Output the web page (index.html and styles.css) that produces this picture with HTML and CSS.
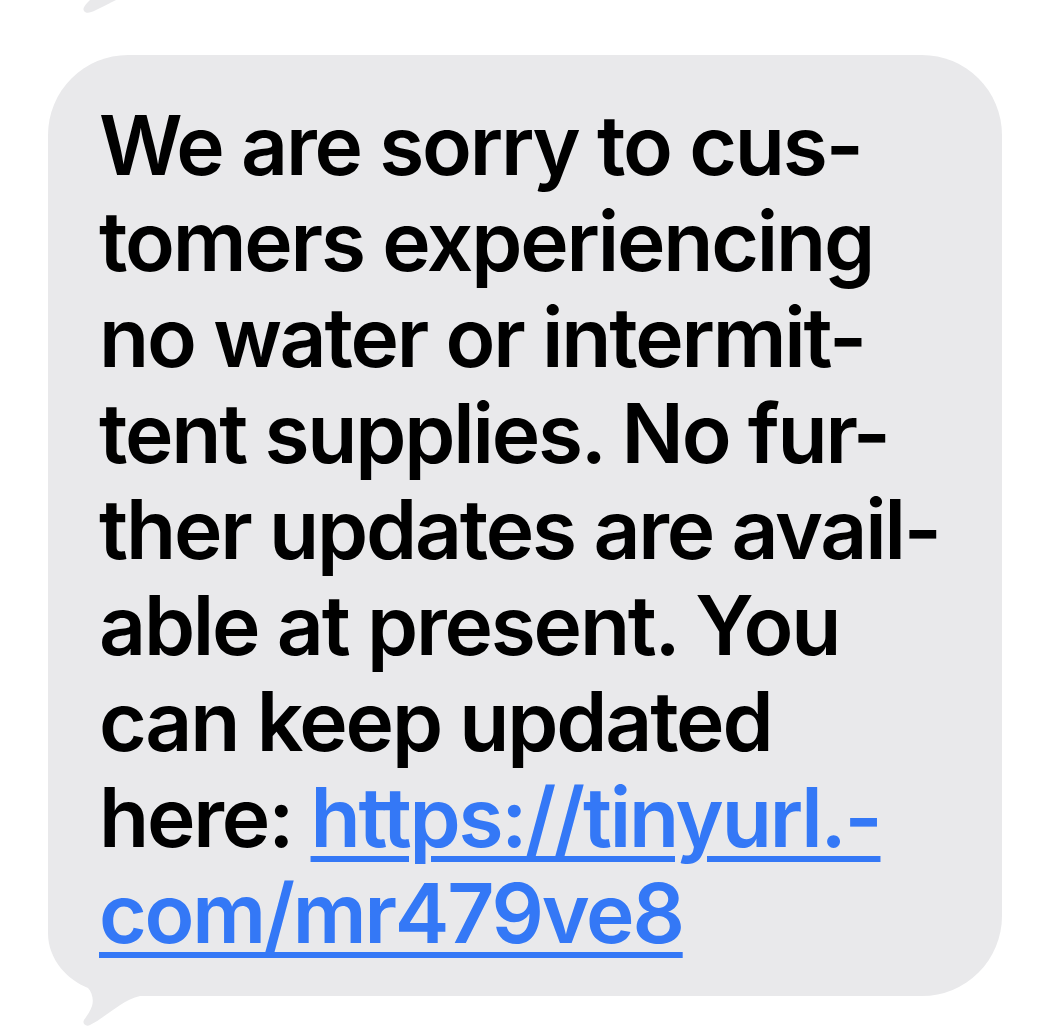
FILE: index.html
```html
<!DOCTYPE html>
<html lang="en">
<head>
<meta charset="utf-8">
<title>Message</title>
<link rel="stylesheet" href="styles.css">
</head>
<body>
<svg class="prev-tail" width="130" height="20" viewBox="0 0 130 20" aria-hidden="true">
  <path d="M90,0 C86,4 82,8 84,11 C86,14 90,13 96,10 C104,6 110,3 116,0 Z" fill="#e9e9eb"/>
</svg>
<div class="thread">
  <div class="bubble">
    <p class="msg">We are sorry to cus-<br>tomers experiencing<br>no water or intermit-<br>tent supplies. No fur-<br>ther updates are avail-<br>able at present. You<br>can keep updated<br>here: <a class="link" href="#">https://tinyurl.-<br>com/mr479ve8</a></p>
    <svg class="tail" width="100" height="130" viewBox="0 0 100 130" aria-hidden="true">
      <path d="M0,0 L0,33 C0,60 20,80 40,88 C44,92 46,100 44,106 C42,112 38,117 36,120 C34,124 38,127 42,125 C58,117 74,100 92,96 L92,0 Z" fill="#e9e9eb"/>
    </svg>
  </div>
</div>
</body>
</html>
```
FILE: styles.css
```css
html, body {
  margin: 0;
  padding: 0;
  background: #ffffff;
}

body {
  width: 1053px;
  height: 1027px;
  overflow: hidden;
  position: relative;
  font-family: "Inter", "Noto Sans", sans-serif;
}

.prev-tail {
  position: absolute;
  left: 0;
  top: 0;
}

.thread {
  padding: 55px 0 0 48px;
}

.bubble {
  position: relative;
  width: 954px;
  height: 941px;
  box-sizing: border-box;
  background: #e9e9eb;
  border-radius: 80px;
  padding: 43px 0 0 51px;
}

.msg {
  margin: 0;
  position: relative;
  z-index: 1;
  font-size: 82px;
  font-weight: 600;
  line-height: 96px;
  color: #000;
  letter-spacing: -2.2px;
  white-space: nowrap;
}

.link {
  color: #3478f6;
  text-decoration: underline;
  text-decoration-thickness: 6px;
  text-underline-offset: 9px;
}

.tail {
  position: absolute;
  left: 0;
  top: 845px;
}
```
